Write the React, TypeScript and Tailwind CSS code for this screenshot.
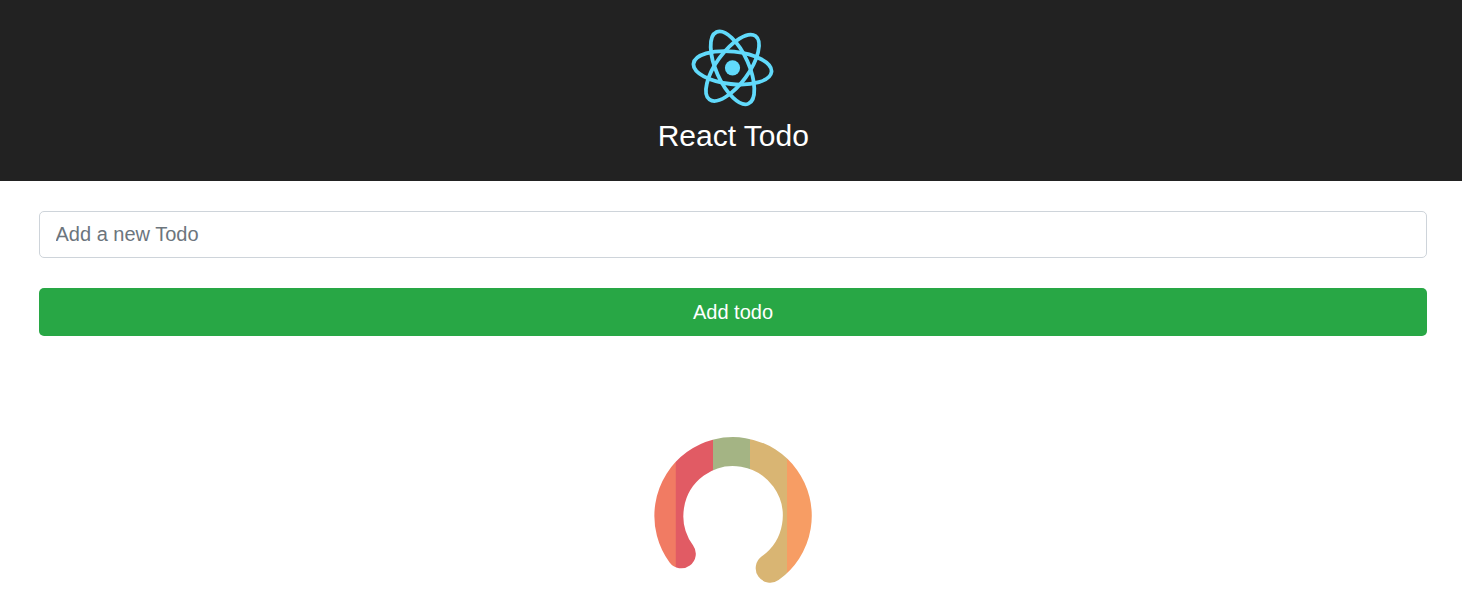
import { useState } from 'react';

const BANDS = [
  { x: 640, width: 36, fill: '#f17b63' },
  { x: 675.8, width: 37.2, fill: '#e15b64' },
  { x: 713, width: 37, fill: '#a4b484' },
  { x: 750, width: 37, fill: '#d9b573' },
  { x: 787, width: 36, fill: '#f79d64' },
];

function ReactLogo() {
  return (
    <svg className="h-[96px] w-[106px]" viewBox="-52.5 -47.8 106 96" aria-hidden="true">
      <circle r="7.6" fill="#61dafb" />
      <g fill="none" stroke="#61dafb" strokeWidth="3.8" transform="rotate(6)">
        <ellipse rx="39.2" ry="16.3" />
        <ellipse rx="39.2" ry="16.3" transform="rotate(60)" />
        <ellipse rx="39.2" ry="16.3" transform="rotate(120)" />
      </g>
    </svg>
  );
}

function Spinner() {
  return (
    <svg className="h-[180px] w-[180px]" viewBox="643 426 180 180" role="img" aria-label="Loading">
      <mask id="ring" maskUnits="userSpaceOnUse" x="643" y="426" width="180" height="180">
        <path
          d="M681.3 553.8 A64.2 64.2 0 1 1 770.2 568.2"
          fill="none"
          stroke="white"
          strokeWidth="29"
          strokeLinecap="round"
        />
      </mask>
      <g mask="url(#ring)">
        {BANDS.map((band) => (
          <rect key={band.x} x={band.x} y="426" width={band.width} height="180" fill={band.fill} />
        ))}
      </g>
    </svg>
  );
}

export default function App() {
  const [value, setValue] = useState('');

  return (
    <div className="flex h-[614px] flex-col overflow-hidden bg-white font-['Liberation_Sans',Arial,sans-serif]">
      <header className="flex h-[181px] shrink-0 flex-col items-center bg-[#222222] pt-5 pl-[3px] text-white">
        <ReactLogo />
        <h1 className="pl-[1.5px] text-[30px] leading-[40px]">React Todo</h1>
      </header>
      <main className="flex flex-col pt-[30px] pr-[35px] pl-[39px]">
        <input
          className="h-[47px] rounded-[5px] border border-[#ced4da] bg-white px-[15.5px] text-[20px] text-[#495057] outline-none placeholder:text-[#6c757d]"
          placeholder="Add a new Todo"
          value={value}
          onChange={(event) => setValue(event.target.value)}
        />
        <button type="button" className="mt-[30px] h-[48px] rounded-[5px] bg-[#28a745] text-[20px] text-white">
          Add todo
        </button>
        <div className="flex justify-center pt-[90px]">
          <Spinner />
        </div>
      </main>
    </div>
  );
}
